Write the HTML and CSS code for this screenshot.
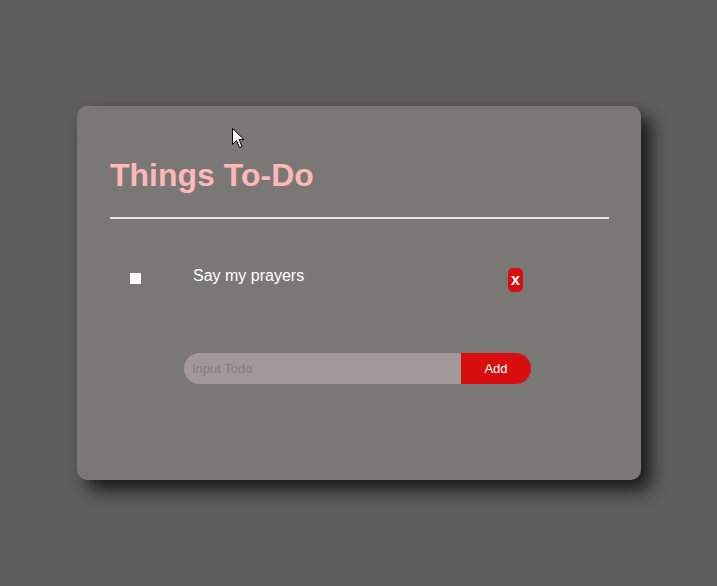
FILE: index.html
```html
<!DOCTYPE html>
<html>
<head>
<meta charset="utf-8">
<link rel="stylesheet" href="styles.css">
</head>
<body>
<div class="card">
  <h1 class="title">Things To-Do</h1>
  <hr class="divider">
  <div class="todo-row">
    <span class="check"></span>
    <span class="todo-text">Say my prayers</span>
    <button class="del-btn">x</button>
  </div>
  <form class="add-form">
    <input class="todo-input" type="text" placeholder="Input Todo">
    <button class="add-btn" type="button">Add</button>
  </form>
</div>
<svg class="cursor" width="13" height="21" viewBox="0 0 13 21">
  <path d="M0.5 0.5 L0.5 16.5 L4.5 12.5 L7.5 19.5 L10 18.5 L7 11.5 L12 11.5 Z" fill="#fff" stroke="#000" stroke-width="1"/>
</svg>
</body>
</html>
```
FILE: styles.css
```css
html, body {
  margin: 0;
  padding: 0;
}
body {
  background: #5e5e5e;
  width: 717px;
  height: 586px;
  overflow: hidden;
  position: relative;
  font-family: "Liberation Sans", Arial, sans-serif;
}
.card {
  margin: 106px 0 0 77px;
  width: 564px;
  height: 374px;
  box-sizing: border-box;
  padding: 51px 32px 0 33px;
  background: #7a7777;
  border-radius: 10px;
  box-shadow: 10px 10px 18px rgba(0, 0, 0, 0.75);
}
.title {
  margin: 0;
  font-size: 32px;
  font-weight: bold;
  color: #ffb8b8;
  line-height: 37px;
}
.divider {
  margin: 23px 0 0 0;
  border: none;
  height: 2px;
  background: #e6e6e6;
}
.todo-row {
  display: flex;
  align-items: flex-start;
  margin-top: 47px;
}
.check {
  margin: 7px 0 0 20px;
  width: 11px;
  height: 11px;
  background: #fff;
}
.todo-text {
  margin-left: 52px;
  color: #fff;
  font-size: 16px;
  line-height: 19px;
}
.del-btn {
  margin: 2px 86px 0 auto;
  width: 15px;
  height: 24px;
  padding: 0;
  border: none;
  border-radius: 5px;
  background: #d90f0f;
  color: #fff;
  font-family: "Liberation Sans", Arial, sans-serif;
  font-size: 16px;
  font-weight: bold;
  line-height: 24px;
}
.add-form {
  display: flex;
  margin: 61px 0 0 74px;
}
.todo-input {
  width: 277px;
  height: 31px;
  box-sizing: border-box;
  border: none;
  outline: none;
  background: #a29898;
  border-radius: 16px 0 0 16px;
  padding: 0 0 0 8px;
  font-family: "Liberation Sans", Arial, sans-serif;
  font-size: 13px;
}
.todo-input::placeholder {
  color: #857d7d;
}
.add-btn {
  width: 70px;
  height: 31px;
  border: none;
  padding: 0;
  background: #d90f0f;
  color: #fff;
  border-radius: 0 16px 16px 0;
  font-family: "Liberation Sans", Arial, sans-serif;
  font-size: 13px;
}
.cursor {
  position: absolute;
  left: 232px;
  top: 128px;
}
```
